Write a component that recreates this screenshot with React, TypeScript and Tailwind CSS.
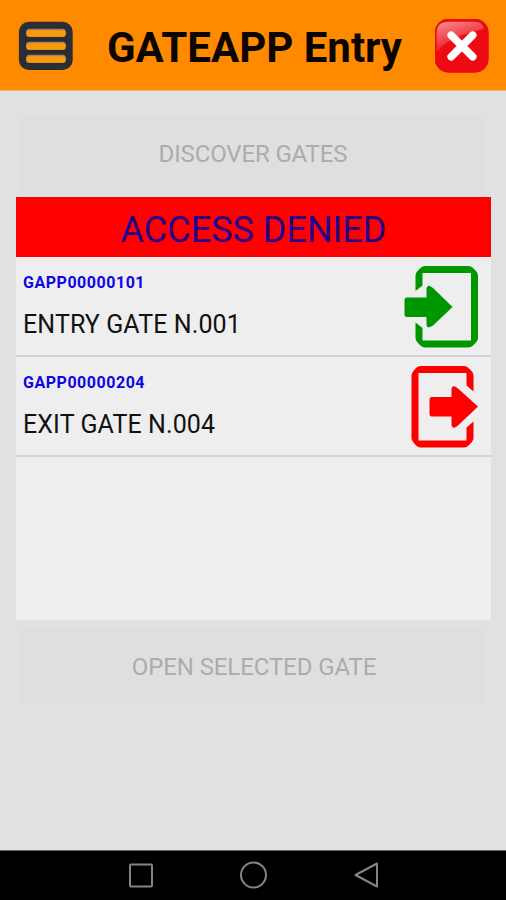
import React from "react";

function MenuIcon() {
  return (
    <svg className="h-[50px] w-[56px]" viewBox="0 0 56 50" fill="none">
      <rect x="3.4" y="3.2" width="48.8" height="43.2" rx="7.5" fill="#292d31" stroke="#292f34" strokeWidth="5" />
      {[7.7, 20.7, 33.7].map((y) => (
        <g key={y}>
          <rect x="8" y={y} width="40" height="8.3" rx="3.5" fill="#aa8158" />
          <rect x="8.5" y={y + 1.5} width="39" height="6.6" rx="3" fill="#f99a0c" />
        </g>
      ))}
    </svg>
  );
}

function CloseIcon() {
  return (
    <svg className="h-[54px] w-[54px]" viewBox="0.3 0.3 54 54" fill="none">
      <defs>
        <linearGradient id="gloss" x1="14" y1="2" x2="23" y2="30" gradientUnits="userSpaceOnUse">
          <stop offset="0" stopColor="#fff" stopOpacity=".5" />
          <stop offset="1" stopColor="#fff" stopOpacity=".04" />
        </linearGradient>
      </defs>
      <rect x="0.5" y="0.5" width="53" height="53" rx="13" fill="#ee0a12" stroke="#e30c10" />
      <path d="M2 34V14Q2 3 14 3H40Q48 3 49 10Q40 13 26 17Q9 23 2 34Z" fill="url(#gloss)" />
      <path d="M16.5 16.500L38 38M38 16.500L16.500 38" stroke="#fff" strokeWidth="7.6" strokeLinecap="round" />
    </svg>
  );
}

function EntryIcon() {
  return (
    <svg className="h-[82px] w-[74px]" viewBox="0 0 74 82" fill="#009600">
      <path d="M11.500 25V9.500Q11.500 7 13.500 5L16.500 2Q18.500 0 21 0H64.500Q67 0 69 2L72 5Q74 7 74 9.500V72Q74 74.500 72 76.500L69 79.500Q67 81.500 64.500 81.500H21Q18.500 81.500 16.500 79.500L13.500 76.500Q11.500 74.500 11.500 72V56.500L18.500 62V74.500H67V7H18.500V19.500Z" />
      <path d="M2.500 31.500H22.500V22.500Q23 19 26 20L29 22L48.500 41L29 59.500L26 61Q23 62 22.500 59V51H2.500Q0.500 51 0.500 48.500V34Q0.500 31.500 2.500 31.500Z" />
    </svg>
  );
}

function ExitIcon() {
  return (
    <svg className="h-[82px] w-[67px]" viewBox="0 0 67 82" fill="#ff0000">
      <path d="M62.500 25.500V9.500Q62.500 7 60.500 5L57.500 2Q55.500 0 53 0H9.500Q7 0 5 2L2.500 5Q0.500 7 0.500 9.500V72Q0.500 74.500 2.500 76.500L5 79.500Q7 81.500 9.500 81.500H53Q55.500 81.500 57.500 79.500L60.500 76.500Q62.500 74.500 62.500 72V55.500L55.500 61.500V74.500H7.500V7H55.500V19.500Z" />
      <path d="M20.500 31H40.500V23.500Q41 19 44 20.500L47 22.500L67 40.500L47 59.500L44 61.500Q41 62.500 40.500 59V50.500H20.500Q18.500 50.500 18.500 48V33.500Q18.500 31 20.500 31Z" />
    </svg>
  );
}

function GateRow({ id, name, children }: { id: string; name: string; children: React.ReactNode }) {
  return (
    <li className="flex h-[100px] justify-between border-b-2 border-[#d4d4d4] pl-[7px]">
      <div className="flex flex-col pt-[14px]">
        <span className="text-[16px] leading-[23px] font-bold tracking-[0.53px] text-[#0e06e4]">{id}</span>
        <span className="mt-[17px] text-[25px] leading-[28px] tracking-[0.1px] text-[#111]">{name}</span>
      </div>
      <div className="pt-[9px] pr-[13px]">{children}</div>
    </li>
  );
}

export default function App() {
  return (
    <div className="flex h-[900px] w-[506px] flex-col overflow-hidden bg-[#e1e1e1] font-['Roboto',sans-serif]">
      <header className="flex h-[91px] items-start justify-between border-b border-[#f5b980] bg-[#ff8a00] pr-[17px] pl-[18px]">
        <div className="pt-[21px]"><MenuIcon /></div>
        <h1 className="pt-[24px] text-[42px] leading-[48px] font-bold whitespace-nowrap text-[#0a0500]">GATEAPP Entry</h1>
        <div className="pt-[19px]"><CloseIcon /></div>
      </header>
      <main className="flex flex-1 flex-col px-[16px]">
        <button className="mx-[5px] mt-[24px] h-[82px] bg-[#dfdfdf] pb-[5px] text-[24px] tracking-[-0.14px] text-[#acacac]">DISCOVER GATES</button>
        <section className="h-[423px] w-[475px] bg-[#eeeeee]">
          <div className="flex h-[60px] items-center justify-center bg-[#ff0000] pt-[5px] text-[36px] text-[#25008a]">ACCESS DENIED</div>
          <ul>
            <GateRow id="GAPP00000101" name="ENTRY GATE N.001"><EntryIcon /></GateRow>
            <GateRow id="GAPP00000204" name="EXIT GATE N.004"><ExitIcon /></GateRow>
          </ul>
        </section>
        <button className="mx-[5px] mt-[7px] h-[78px] bg-[#dfdfdf] pt-[2px] pl-[2px] text-[24px] tracking-[-0.1px] text-[#acacac]">OPEN SELECTED GATE</button>
      </main>
      <nav className="flex h-[50px] items-center justify-center border-t border-[#666] bg-black">
        <svg className="h-[49px] w-[506px]" viewBox="0 0 506 49" fill="none" stroke="#858585" strokeWidth="2">
          <rect x="130" y="13.500" width="22" height="22" rx="1" />
          <circle cx="253.5" cy="24" r="12.500" />
          <path d="M377 12.500V35.500L355.500 24Z" strokeLinejoin="round" />
        </svg>
      </nav>
    </div>
  );
}
